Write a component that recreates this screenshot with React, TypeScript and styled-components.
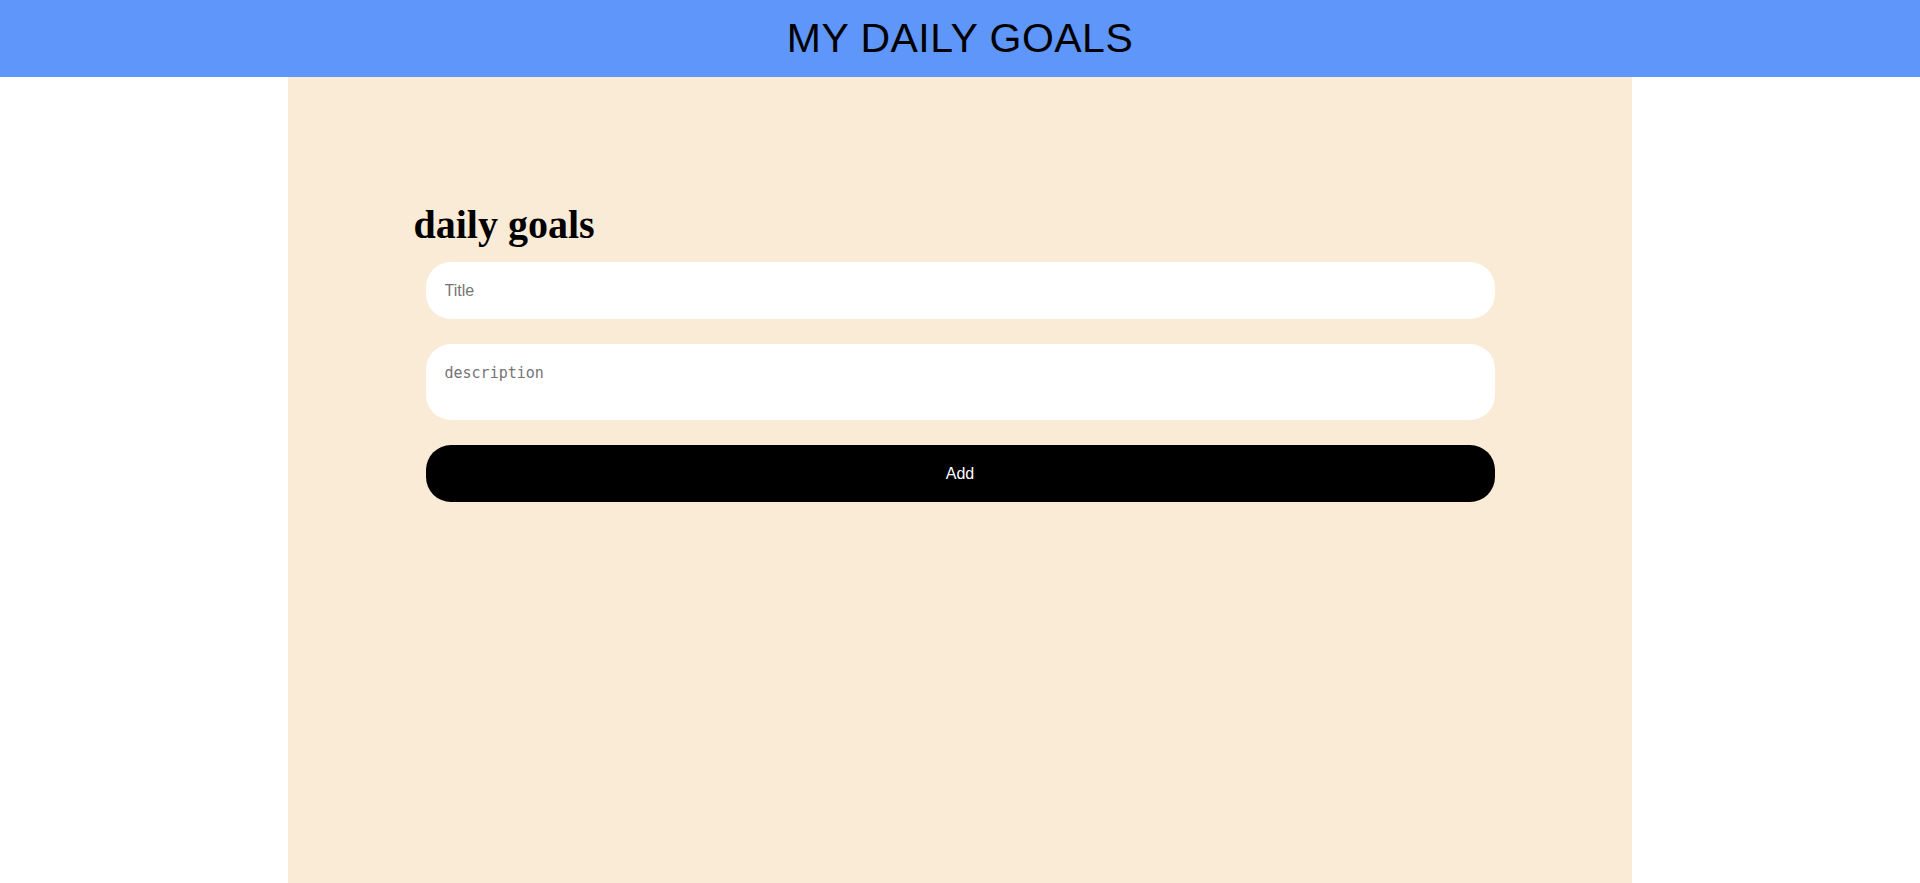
import React from "react";
import styled, { createGlobalStyle } from "styled-components";

const GlobalStyle = createGlobalStyle`
  html, body {
    margin: 0;
    padding: 0;
    background: #ffffff;
  }
  * { box-sizing: border-box; }
`;

const Page = styled.div`
  display: flex;
  flex-direction: column;
  min-height: 100vh;
`;

const Header = styled.header`
  height: 77px;
  background: #5f96f9;
  display: flex;
  align-items: center;
  justify-content: center;
`;

const HeaderTitle = styled.h1`
  margin: 0;
  font-family: "Comic Sans MS", "Liberation Sans", sans-serif;
  font-weight: 400;
  font-size: 41px;
  letter-spacing: 0.5px;
  color: #000;
`;

const Panel = styled.main`
  flex: 1;
  width: 70%;
  margin: 0 auto;
  background: antiquewhite;
  padding: 126px 0 40px;
  display: flex;
  justify-content: center;
`;

const Form = styled.form`
  width: 1093px;
  display: flex;
  flex-direction: column;
`;

const Heading = styled.h2`
  margin: 0 0 15px 0;
  font-family: "Liberation Serif", "Times New Roman", serif;
  font-weight: 700;
  font-size: 40px;
  line-height: 44px;
  color: #000;
`;

const Fields = styled.div`
  display: flex;
  flex-direction: column;
  gap: 25px;
  padding: 0 12px;
`;

const TextInput = styled.input`
  height: 57px;
  width: 100%;
  border: none;
  outline: none;
  border-radius: 25px;
  background: #fff;
  padding: 0 19px;
  font-family: "Liberation Sans", Arial, sans-serif;
  font-size: 16px;
  color: #000;
  &::placeholder { color: #757575; }
`;

const TextArea = styled.textarea`
  height: 76px;
  width: 100%;
  border: none;
  outline: none;
  resize: none;
  border-radius: 25px;
  background: #fff;
  padding: 20px 19px 10px;
  font-family: "DejaVu Sans Mono", monospace;
  font-size: 15px;
  line-height: 18px;
  color: #000;
  &::placeholder { color: #757575; }
`;

const AddButton = styled.button`
  height: 57px;
  width: 100%;
  border: none;
  border-radius: 25px;
  background: #000;
  color: #fff;
  font-family: "Liberation Sans", Arial, sans-serif;
  font-size: 16px;
  cursor: pointer;
`;

export default function App() {
  return (
    <>
      <GlobalStyle />
      <Page>
        <Header>
          <HeaderTitle>MY DAILY GOALS</HeaderTitle>
        </Header>
        <Panel>
          <Form onSubmit={(e) => e.preventDefault()}>
            <Heading>daily goals</Heading>
            <Fields>
              <TextInput type="text" placeholder="Title" />
              <TextArea placeholder="description" />
              <AddButton type="submit">Add</AddButton>
            </Fields>
          </Form>
        </Panel>
      </Page>
    </>
  );
}
